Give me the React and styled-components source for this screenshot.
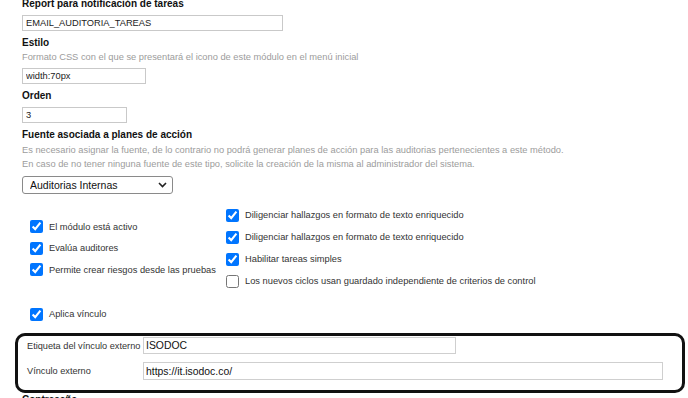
import React from 'react';
import styled, { createGlobalStyle } from 'styled-components';

const GlobalStyle = createGlobalStyle`
  body {
    margin: 0;
    background: #fff;
    font-family: "Liberation Sans", Arial, sans-serif;
  }
`;

function App() {
  return (
    <Page>
      <GlobalStyle />
      <Fields>
        <Label $mt={-2}>Report para notificación de tareas</Label>
        <TextInput $w={261} $mt={5} defaultValue="EMAIL_AUDITORIA_TAREAS" />

        <Label>Estilo</Label>
        <Help>Formato CSS con el que se presentará el icono de este módulo en el menú inicial</Help>
        <TextInput $w={124} $mt={4} defaultValue="width:70px" />

        <Label>Orden</Label>
        <TextInput $w={105} $mt={5} defaultValue="3" />

        <Label>Fuente asociada a planes de acción</Label>
        <Help $mt={2}>
          Es necesario asignar la fuente, de lo contrario no podrá generar planes de acción para las auditorias pertenecientes a este método.
          <br />
          En caso de no tener ninguna fuente de este tipo, solicite la creación de la misma al administrador del sistema.
        </Help>
        <SelectWrap>
          <Select defaultValue="internas">
            <option value="internas">Auditorias Internas</option>
          </Select>
          <Chevron width="9" height="6" viewBox="0 0 9 6">
            <path d="M1 1l3.5 3.5L8 1" fill="none" stroke="#222" strokeWidth="1.6" />
          </Chevron>
        </SelectWrap>

        <Checks>
          <LeftCol>
            <CheckRow $h={21.5}><Check type="checkbox" defaultChecked />El módulo está activo</CheckRow>
            <CheckRow $h={21.5}><Check type="checkbox" defaultChecked />Evalúa auditores</CheckRow>
            <CheckRow $h={21.5}><Check type="checkbox" defaultChecked />Permite crear riesgos desde las pruebas</CheckRow>
          </LeftCol>
          <RightCol>
            <CheckRow><Check type="checkbox" defaultChecked />Diligenciar hallazgos en formato de texto enriquecido</CheckRow>
            <CheckRow><Check type="checkbox" defaultChecked />Diligenciar hallazgos en formato de texto enriquecido</CheckRow>
            <CheckRow><Check type="checkbox" defaultChecked />Habilitar tareas simples</CheckRow>
            <CheckRow><Check type="checkbox" />Los nuevos ciclos usan guardado independiente de criterios de control</CheckRow>
          </RightCol>
        </Checks>

        <LinkRow>
          <CheckRow><Check type="checkbox" defaultChecked />Aplica vínculo</CheckRow>
        </LinkRow>
      </Fields>

      <LinkBox>
        <BoxLabel>Etiqueta del vínculo externo</BoxLabel>
        <BoxInput $w={313} defaultValue="ISODOC" />
        <BoxLabel>Vínculo externo</BoxLabel>
        <BoxInput $w={520} $h={18} defaultValue="https://it.isodoc.co/" />
      </LinkBox>

      <Fields>
        <Label $mt={1}>Contraseña</Label>
      </Fields>
    </Page>
  );
}

export default App;

const Page = styled.div`
  height: 398px;
  overflow: hidden;
  padding-left: 15px;
  padding-right: 3px;
`;

const Fields = styled.div`
  padding-left: 7px;
  padding-top: 0.1px;
`;

const Label = styled.div`
  margin-top: ${p => (p.$mt ?? 6)}px;
  font-size: 10px;
  line-height: 12px;
  font-weight: bold;
  color: #111;
`;

const Help = styled.div`
  margin-top: ${p => (p.$mt ?? 1)}px;
  font-size: 9.3px;
  line-height: 14px;
  color: #9c9c9c;
`;

const TextInput = styled.input`
  display: block;
  box-sizing: border-box;
  width: ${p => p.$w}px;
  height: 16px;
  margin: ${p => p.$mt}px 0 0 0;
  padding: 0 3px;
  border: 1px solid #c9c9c9;
  font-family: "Liberation Sans", Arial, sans-serif;
  font-size: 9.3px;
  color: #222;
  outline: none;
`;

const SelectWrap = styled.div`
  position: relative;
  width: 151px;
  margin-top: 5px;
`;

const Select = styled.select`
  display: block;
  box-sizing: border-box;
  width: 151px;
  height: 18px;
  margin: 0;
  padding: 0 0 0 7px;
  appearance: none;
  background: #fff;
  border: 1px solid #8a8a8a;
  border-radius: 3px;
  font-family: "Liberation Sans", Arial, sans-serif;
  font-size: 10.5px;
  color: #111;
`;

const Chevron = styled.svg`
  position: absolute;
  right: 6px;
  top: 6px;
  pointer-events: none;
`;

const Checks = styled.div`
  display: flex;
  align-items: center;
  margin-top: 10px;
`;

const LeftCol = styled.div`
  box-sizing: border-box;
  width: 204px;
  padding-left: 8px;
`;

const RightCol = styled.div`
  display: flex;
  flex-direction: column;
`;

const CheckRow = styled.label`
  display: flex;
  align-items: center;
  gap: 6px;
  height: ${p => p.$h ?? 22}px;
  font-size: 9.3px;
  color: #333;
  white-space: nowrap;
`;

const Check = styled.input`
  width: 13px;
  height: 13px;
  margin: 0;
  flex: none;
`;

const LinkRow = styled.div`
  margin-top: 11px;
  padding-left: 8px;
`;

const LinkBox = styled.div`
  display: grid;
  grid-template-columns: 116px 1fr;
  row-gap: 8px;
  align-items: center;
  margin-top: 8px;
  padding: 1px 0 10px 9px;
  border: 3px solid #111;
  border-radius: 10px;
`;

const BoxLabel = styled.div`
  font-size: 9.2px;
  color: #333;
  white-space: nowrap;
`;

const BoxInput = styled.input`
  box-sizing: border-box;
  width: ${p => p.$w}px;
  height: ${p => p.$h ?? 17}px;
  margin: 0;
  padding: 0 2px;
  border: 1px solid #cfcfcf;
  font-family: "Liberation Sans", Arial, sans-serif;
  font-size: 10.4px;
  color: #111;
  outline: none;
`;
